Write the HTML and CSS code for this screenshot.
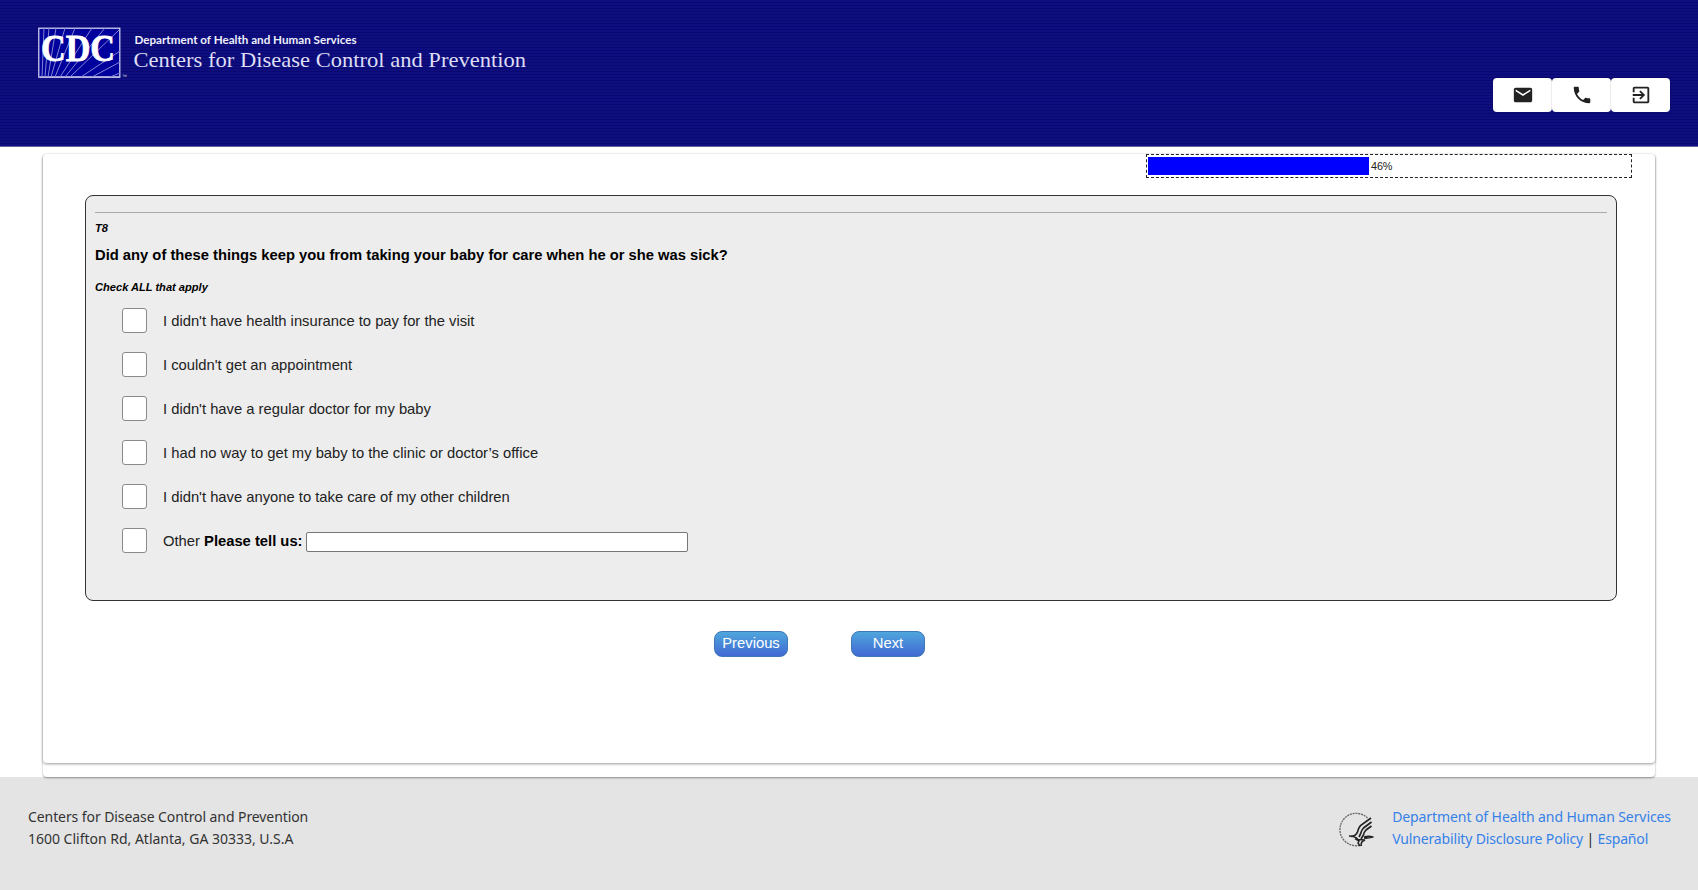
FILE: index.html
```html
<!DOCTYPE html>
<html lang="en">
<head>
<meta charset="utf-8">
<title>Survey</title>
<link rel="stylesheet" href="styles.css">
</head>
<body>
<header class="header">
  <svg class="brand" width="500" height="60" viewBox="0 0 500 60" role="img">
    <rect x="0.8" y="1.2" width="81" height="49" fill="#00009c" stroke="#dcdcf5" stroke-width="1.2"/>
    <path d="M2 50H82" stroke="#b8b8e4" stroke-width="1.6"/>
    <path d="M4 50L6 1M7 50L11 1M10 50L18 1M13 50L27 1M17 50L37 1M22 50L54 1M27 50L67 1M32 50L81 3M43 50L82 24M54 50L82 35M72 50L82 46" fill="none" stroke="#8585d5" stroke-width="1"/>
    <text class="brand-cdc" x="3" y="34" textLength="74" lengthAdjust="spacingAndGlyphs">CDC</text>
    <text class="brand-tm" x="84" y="51">™</text>
    <text class="brand-dept" x="96.500" y="16.500" textLength="222" lengthAdjust="spacingAndGlyphs">Department of Health and Human Services</text>
    <text class="brand-name" x="95.500" y="40.200" textLength="392.500" lengthAdjust="spacingAndGlyphs">Centers for Disease Control and Prevention</text>
  </svg>
  <nav class="tools">
    <a class="tool"><svg width="22" height="22" viewBox="0 0 24 24"><path d="M20 4H4c-1.100 0-1.990.9-1.990 2L2 18c0 1.100.9 2 2 2h16c1.100 0 2-.9 2-2V6c0-1.100-.9-2-2-2zm0 4l-8 5-8-5V6l8 5 8-5v2z"/></svg></a>
    <a class="tool"><svg width="22" height="22" viewBox="0 0 24 24"><path d="M6.620 10.790c1.440 2.830 3.760 5.140 6.590 6.590l2.200-2.200c.27-.27.67-.36 1.020-.24 1.120.37 2.330.57 3.570.57.55 0 1 .45 1 1V20c0 .55-.45 1-1 1-9.390 0-17-7.610-17-17 0-.55.45-1 1-1h3.500c.55 0 1 .45 1 1 0 1.250.2 2.450.57 3.570.11.35.03.74-.25 1.020l-2.200 2.200z"/></svg></a>
    <a class="tool"><svg width="22" height="22" viewBox="0 0 24 24"><path d="M10.090 15.590L11.500 17l5-5-5-5-1.410 1.410L12.670 11H3v2h9.670l-2.580 2.590zM19 3H5c-1.110 0-2 .9-2 2v4h2V5h14v14H5v-4H3v4c0 1.100.89 2 2 2h14c1.100 0 2-.9 2-2V5c0-1.100-.9-2-2-2z"/></svg></a>
  </nav>
</header>
<div class="outer">
  <main class="panel">
    <div class="progress"><div class="bar"></div><span class="pct">46%</span></div>
    <section class="question">
      <hr class="rule">
      <div class="code">T8</div>
      <h1 class="title">Did any of these things keep you from taking your baby for care when he or she was sick?</h1>
      <div class="hint">Check ALL that apply</div>
      <div class="options">
        <label class="option"><i class="box"></i><span class="text">I didn't have health insurance to pay for the visit</span></label>
        <label class="option"><i class="box"></i><span class="text">I couldn't get an appointment</span></label>
        <label class="option"><i class="box"></i><span class="text">I didn't have a regular doctor for my baby</span></label>
        <label class="option"><i class="box"></i><span class="text">I had no way to get my baby to the clinic or doctor’s office</span></label>
        <label class="option"><i class="box"></i><span class="text">I didn't have anyone to take care of my other children</span></label>
        <label class="option"><i class="box"></i><span class="text">Other <b>Please tell us:</b></span><input class="other" type="text"></label>
      </div>
    </section>
    <div class="actions"><button class="btn">Previous</button><button class="btn">Next</button></div>
  </main>
</div>
<footer class="footer">
  <div class="address">Centers for Disease Control and Prevention<br><span class="street">1600 Clifton Rd, Atlanta, GA 30333, U.S.A</span></div>
  <div class="links">
    <svg class="seal" width="36" height="36" viewBox="0 0 36 36" fill="none" stroke="#222">
      <path d="M29.500 6A16.200 16.200 0 1 0 21 33.500" stroke="#666" stroke-width="1.300" stroke-dasharray="2 .8"/>
      <path d="M33 6L22.500 13.500Q20.500 16 19.500 20Q18 24 13 24.500M33.500 10L25.500 16Q23.500 18 22.500 22L21 25M33.500 14L28 18Q26 20 25.500 23L23 27" stroke-width="1.700"/>
      <path d="M11 24Q17 24 20 27.500L27 28Q22 30 23.500 34M17 26.500L21 29L20 31L22 34M26 25Q31 23.500 34.500 25Q30 26.500 26 26" stroke-width="1.500"/>
    </svg>
    <div><a>Department of Health and Human Services</a><br><span class="policy"><a>Vulnerability Disclosure Policy</a> | <a>Español</a></span></div>
  </div>
</footer>
</body>
</html>
```
FILE: styles.css
```css
* { box-sizing: border-box; }
body { margin: 0; height: 890px; display: flex; flex-direction: column; background: #fff; font-family: "Liberation Sans", Arial, sans-serif; }
.header { height: 147px; flex: none; display: flex; justify-content: space-between; padding: 27px 28px 0 38px; border-bottom: 1px solid #62629c; background: repeating-linear-gradient(#0e0e80 0 2px, #080870 2px 3px); }
.brand-cdc { font: bold 37px "Liberation Serif", serif; fill: #fff; stroke: #fff; stroke-width: .8px; }
.brand-tm { font: 5px "Liberation Sans", sans-serif; fill: #ddd; }
.brand-dept { font: bold 11px Lato, sans-serif; fill: #eeeefa; }
.brand-name { font: 22px "Liberation Serif", serif; fill: #dedef4; }
.tools { display: flex; margin-top: 51px; height: 34px; }
.tool { width: 59px; display: flex; align-items: center; justify-content: center; background: #fff; border-radius: 4px; box-shadow: 0 0 2px rgba(0,0,0,.25); }
.tool svg { fill: #222; }
.outer { margin: 7px 43px 0; height: 623px; flex: none; border-radius: 4px; position: relative; z-index: 1; background: #fff; box-shadow: 0 1px 2px rgba(0,0,0,.4); }
.panel { height: 609px; border-radius: 4px; box-shadow: 0 1px 3px rgba(0,0,0,.4); display: flow-root; background: #fff; }
.progress { width: 486px; height: 24px; margin: 0 23px 0 auto; border: 1px dashed #222; display: flex; align-items: center; padding: 0 1px; font-size: 10.800px; letter-spacing: -.1px; color: #222; }
.bar { width: 221px; height: 18px; background: #00f; margin-right: 2px; }
.question { margin: 17px 38px 0 42px; height: 406px; background: #ededed; border: 1px solid #333; border-radius: 8px; padding: 0 9px; display: flow-root; }
.rule { margin: 16px 0 0; border: 0; height: 1px; background: #aaa; }
.code { font: italic bold 11.100px/14px "Liberation Sans", sans-serif; margin-top: 8px; }
.title { font-size: 14.750px; line-height: 20px; margin: 10px 0 0; color: #000; }
.hint { font: italic bold 11.100px/14px "Liberation Sans", sans-serif; margin-top: 15px; }
.options { margin: 4px 0 0 27px; }
.option { display: flex; align-items: center; height: 44px; font-size: 14.780px; color: #222; }
.text { padding-top: 2px; }
.option b { color: #000; }
.box { width: 25px; height: 25px; border: 1px solid #8a8a8a; border-radius: 3px; background: #fff; margin-right: 16px; }
.other { width: 382px; height: 20px; margin: 4px 0 0 3px; border: 1px solid #777; border-radius: 2px; background: #fff; padding: 0; }
.actions { display: flex; gap: 63px; margin: 30px 0 0 671px; }
.btn { width: 74px; height: 26px; padding: 0 0 2px; border: 1px solid #3f76b4; border-radius: 8px; background: linear-gradient(#4fa6dc, #4169d3); color: #fff; font: 14.800px "Liberation Sans", sans-serif; }
.footer { flex: 1; display: flex; justify-content: space-between; padding: 29px 27px 0 28px; background: #e4e4e4; color: #333; font: 14px/22px "Noto Sans", sans-serif; letter-spacing: -.085px; }
.street { letter-spacing: -.01px; }
.policy { letter-spacing: -.15px; }
.links { display: flex; color: #222; }
.links a { color: #3581e8; }
.seal { margin: 6px 18px 0 0; }
```
